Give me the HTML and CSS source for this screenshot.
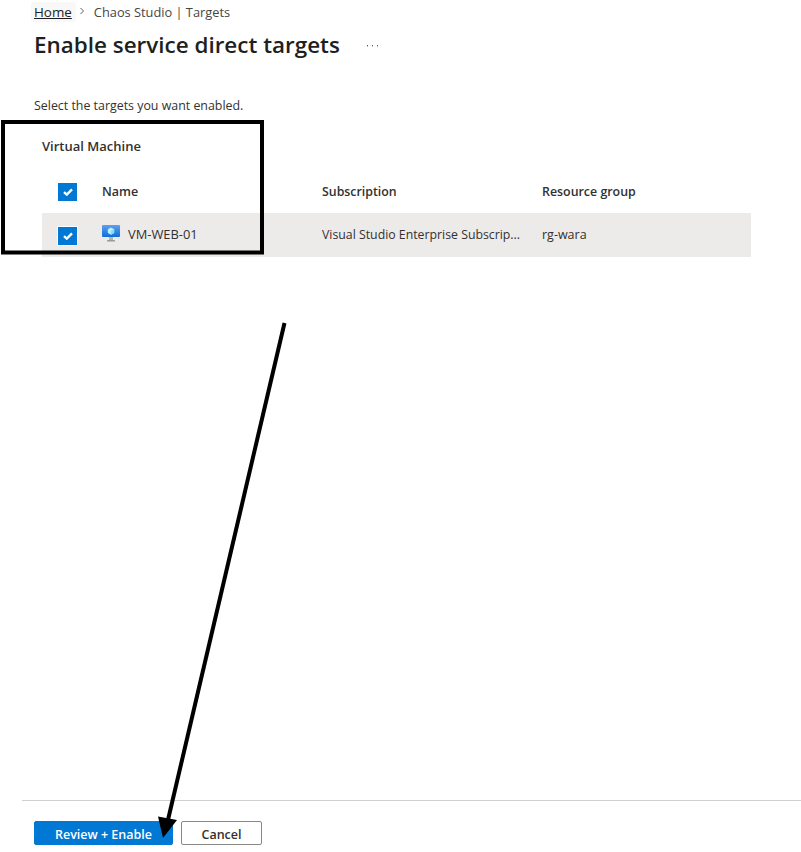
FILE: index.html
```html
<!DOCTYPE html>
<html lang="en">
<head>
<meta charset="utf-8">
<title>Enable service direct targets</title>
<link rel="stylesheet" href="styles.css">
</head>
<body>
<div class="page">
  <main class="content">
    <nav class="crumbs">
      <a class="crumb-link">Home</a>
      <svg class="crumb-sep" width="6" height="8" viewBox="0 0 6 8"><path d="M1.5 1 L4.5 4 L1.5 7" fill="none" stroke="#605e5c" stroke-width="1"/></svg>
      <span class="crumb-current">Chaos Studio | Targets</span>
    </nav>
    <div class="title-row">
      <h1>Enable service direct targets</h1>
      <svg class="more" width="12" height="2" viewBox="0 0 12 2"><rect x="0" y="0" width="1" height="1.4" fill="#605e5c"/><rect x="5" y="0" width="1" height="1.4" fill="#605e5c"/><rect x="10" y="0" width="1" height="1.4" fill="#605e5c"/></svg>
    </div>
    <p class="intro">Select the targets you want enabled.</p>
    <section class="group">
      <h2>Virtual Machine</h2>
      <div class="row head">
        <div class="c-check"><span class="check"><svg width="10" height="8" viewBox="0 0 10 8"><path d="M1 4.2 L3.8 6.6 L9 1.4" fill="none" stroke="#fff" stroke-width="2.4"/></svg></span></div>
        <div class="c-name">Name</div>
        <div class="c-sub">Subscription</div>
        <div class="c-rg">Resource group</div>
      </div>
      <div class="row item">
        <div class="c-check"><span class="check outlined"><svg width="10" height="8" viewBox="0 0 10 8"><path d="M1 4.2 L3.8 6.6 L9 1.4" fill="none" stroke="#fff" stroke-width="2.4"/></svg></span></div>
        <div class="c-name name-cell">
          <svg class="vm" width="18" height="17" viewBox="0 0 18 17">
            <defs><linearGradient id="screen" x1="0" y1="0" x2="0" y2="1"><stop offset="0" stop-color="#5ea0ef"/><stop offset="1" stop-color="#0f6fd6"/></linearGradient></defs>
            <rect x="0" y="0" width="18" height="12" rx="1" fill="url(#screen)"/>
            <path d="M9 2.5 L12.2 4.3 V7.9 L9 9.7 L5.8 7.9 V4.3 Z" fill="#b4f0ff"/>
            <path d="M9 6.1 L12.2 4.3 V7.9 L9 9.7 Z" fill="#7fdcf5"/>
            <rect x="7" y="12" width="4" height="3" fill="#b5b5b5"/>
            <rect x="5" y="15" width="8" height="1.5" rx=".5" fill="#9a9a9a"/>
          </svg>
          <span class="vm-name">VM-WEB-01</span>
        </div>
        <div class="c-sub">Visual Studio Enterprise Subscrip...</div>
        <div class="c-rg">rg-wara</div>
      </div>
    </section>
  </main>
  <footer class="foot">
    <button class="btn primary">Review + Enable</button>
    <button class="btn">Cancel</button>
  </footer>
</div>
<svg class="marks" width="801" height="852" viewBox="0 0 801 852">
  <rect x="3" y="122" width="259" height="130.5" fill="none" stroke="#000" stroke-width="4"/>
  <path d="M284.5 323 L167.5 822" fill="none" stroke="#000" stroke-width="4"/>
  <path d="M158 816.5 L177 820 L163 838 Z" fill="#000"/>
</svg>
</body>
</html>
```
FILE: styles.css
```css
* { box-sizing: border-box; }
html, body { margin: 0; padding: 0; background: #fff; }
body {
  width: 801px;
  height: 852px;
  overflow: hidden;
  position: relative;
  font-family: "Open Sans", "Noto Sans", "Liberation Sans", sans-serif;
  font-size: 12.5px;
  color: #323130;
}
.page { display: flex; flex-direction: column; height: 852px; }
.content { flex: 1; padding: 3px 0 0 34px; }
.crumbs { display: flex; align-items: center; height: 19px; line-height: 19px; color: #484644; }
.crumb-link { color: #201f1e; font-size: 13.4px; text-decoration: underline; background: #f8f8f8; border-radius: 3px; margin: -2px -4px 0 -3px; padding: 1px 4px 1px 3px; line-height: 18px; }
.crumb-sep { margin: 0 9px 0 7px; position: relative; top: -2px; }
.crumb-current { font-size: 12.8px; }
.title-row { display: flex; align-items: center; height: 36px; margin-top: 5px; }
h1 { margin: 0; font-size: 22.45px; font-weight: 600; color: #201f1e; line-height: 36px; width: 333px; white-space: nowrap; }
.more { position: relative; top: 1px; }
.intro { margin: 34px 0 0; line-height: 18px; font-size: 12.4px; color: #323130; }
.group { margin: 0 0 0 8px; width: 709px; }
h2 { margin: 22px 0 0; font-size: 13px; font-weight: 600; line-height: 18px; color: #323130; }
.row { display: flex; align-items: center; }
.head { height: 44px; margin-top: 14px; font-weight: 600; color: #323130; }
.item { height: 44px; padding-bottom: 2px; background: #edebe9; }
.c-check { width: 60px; padding-left: 16px; display: flex; }
.c-name { width: 220px; }
.c-sub { width: 220px; white-space: nowrap; }
.item .c-sub { font-size: 12.3px; }
.head .c-sub { font-size: 12.35px; }
.head .c-rg { font-size: 12.4px; }
.c-rg { flex: 1; }
.check { width: 19px; height: 18px; background: #0078d4; display: flex; align-items: center; justify-content: center; position: relative; top: 1px; }
.item .check { top: 2px; }
.outlined { outline: 1px solid #fff; }
.name-cell { display: flex; align-items: center; gap: 8px; }
.vm { position: relative; top: -1px; }
.vm-name { font-size: 12.9px; }
.foot { height: 52px; margin-left: 22px; border-top: 1px solid #d2d0ce; padding: 20px 0 0 12px; display: flex; align-items: flex-start; gap: 8px; }
.btn { height: 24px; width: 81px; padding: 2px 0 0; font: 600 12.5px "Open Sans", "Noto Sans", "Liberation Sans", sans-serif; color: #323130; background: #fff; border: 1px solid #8a8886; border-radius: 2px; }
.primary { width: 139px; background: #0078d4; border-color: #0078d4; color: #fff; }
.marks { position: absolute; left: 0; top: 0; pointer-events: none; }
```
